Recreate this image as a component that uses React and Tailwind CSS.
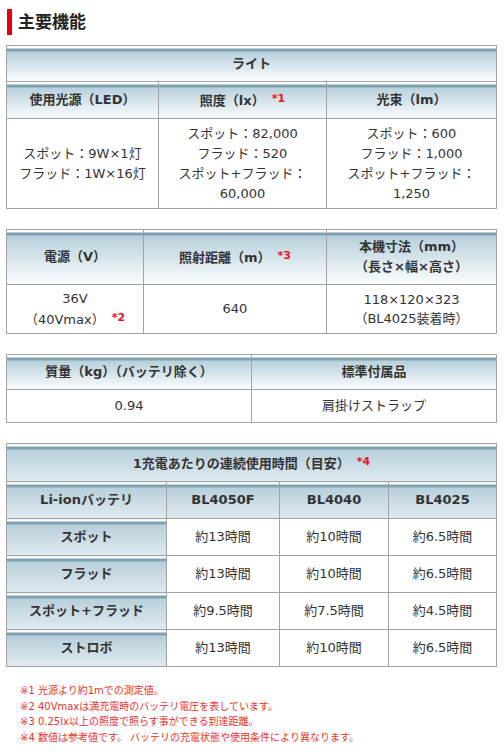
import React from "react";

const hd =
  "border border-[#a3a3a3] text-center font-bold text-[13px] text-[#333] bg-[linear-gradient(to_bottom,#fff_0,#fff_2px,#7ea3b0_2px,#7ea3b0_5px,#b7cfdb_5px,#fbfdfe_100%)]";
const hd2 =
  "border border-[#a3a3a3] text-center font-bold text-[13px] text-[#333] bg-[linear-gradient(to_bottom,#fff_0,#fff_2px,#7ea3b0_2px,#7ea3b0_5px,#b7cfdb_5px,#dfeaf0_100%)]";
const td = "border border-[#a3a3a3] text-center text-[13px] text-[#333] bg-white";

function Note({ n }) {
  return (
    <span className="ml-[7px] text-[11px] font-bold text-[#e8161b] align-[3px]">
      *{n}
    </span>
  );
}

export default function App() {
  return (
    <div
      className="w-[504px] h-[754px] bg-white overflow-hidden leading-[20px]"
      style={{ fontFamily: '"DejaVu Sans", Verdana, "Noto Sans CJK JP", sans-serif' }}
    >
      {/* section title */}
      <div className="flex items-center h-[26px] mt-[9px] ml-[7px]">
        <div className="w-[5px] h-[26px] bg-[#e60012]" />
        <h2 className="ml-[6px] text-[17px] font-bold text-[#222]">主要機能</h2>
      </div>

      <div className="mt-[10px] ml-[6px] w-[491px] flex flex-col gap-[20px]">
        {/* ライト */}
        <table className="w-full border-collapse table-fixed">
          <colgroup>
            <col className="w-[152px]" />
            <col className="w-[168px]" />
            <col />
          </colgroup>
          <tbody>
            <tr className="h-[36px]">
              <th colSpan={3} className={hd}>ライト</th>
            </tr>
            <tr className="h-[37px]">
              <th className={hd}>使用光源（LED）</th>
              <th className={hd}>
                照度（lx）<Note n={1} />
              </th>
              <th className={hd}>光束（lm）</th>
            </tr>
            <tr className="h-[90px]">
              <td className={td}>
                スポット：9W×1灯
                <br />
                フラッド：1W×16灯
              </td>
              <td className={td}>
                スポット：82,000
                <br />
                フラッド：520
                <br />
                スポット+フラッド：
                <br />
                60,000
              </td>
              <td className={td}>
                スポット：600
                <br />
                フラッド：1,000
                <br />
                スポット+フラッド：
                <br />
                1,250
              </td>
            </tr>
          </tbody>
        </table>

        {/* 電源 */}
        <table className="w-full border-collapse table-fixed">
          <colgroup>
            <col className="w-[137px]" />
            <col className="w-[183px]" />
            <col />
          </colgroup>
          <tbody>
            <tr className="h-[55px]">
              <th className={hd}>電源（V）</th>
              <th className={hd}>
                照射距離（m）<Note n={3} />
              </th>
              <th className={hd}>
                本機寸法（mm）
                <br />
                （長さ×幅×高さ）
              </th>
            </tr>
            <tr className="h-[49px]">
              <td className={td + " leading-[19px]"}>
                36V
                <br />
                （40Vmax）<Note n={2} />
              </td>
              <td className={td}>640</td>
              <td className={td + " leading-[19px]"}>
                118×120×323
                <br />
                （BL4025装着時）
              </td>
            </tr>
          </tbody>
        </table>

        {/* 質量 */}
        <table className="w-full border-collapse table-fixed">
          <colgroup>
            <col className="w-[245px]" />
            <col />
          </colgroup>
          <tbody>
            <tr className="h-[35px]">
              <th className={hd}>質量（kg）（バッテリ除く）</th>
              <th className={hd}>標準付属品</th>
            </tr>
            <tr className="h-[33px]">
              <td className={td}>0.94</td>
              <td className={td}>肩掛けストラップ</td>
            </tr>
          </tbody>
        </table>

        {/* 連続使用時間 */}
        <table className="w-full border-collapse table-fixed">
          <colgroup>
            <col className="w-[160px]" />
            <col className="w-[113px]" />
            <col className="w-[109px]" />
            <col />
          </colgroup>
          <tbody>
            <tr className="h-[38px]">
              <th colSpan={4} className={hd2}>
                1充電あたりの連続使用時間（目安）<Note n={4} />
              </th>
            </tr>
            <tr className="h-[37px]">
              <th className={hd2}>Li-ionバッテリ</th>
              <th className={hd2}>BL4050F</th>
              <th className={hd2}>BL4040</th>
              <th className={hd2}>BL4025</th>
            </tr>
            {[
              ["スポット", "約13時間", "約10時間", "約6.5時間"],
              ["フラッド", "約13時間", "約10時間", "約6.5時間"],
              ["スポット+フラッド", "約9.5時間", "約7.5時間", "約4.5時間"],
              ["ストロボ", "約13時間", "約10時間", "約6.5時間"],
            ].map((r) => (
              <tr key={r[0]} className="h-[37px]">
                <th className={hd2}>{r[0]}</th>
                <td className={td}>{r[1]}</td>
                <td className={td}>{r[2]}</td>
                <td className={td}>{r[3]}</td>
              </tr>
            ))}
          </tbody>
        </table>
      </div>

      {/* notes */}
      <ul className="mt-[16px] ml-[20px] text-[10px] leading-[15.5px] text-[#e8332c]">
        <li>※1 光源より約1mでの測定値。</li>
        <li>※2 40Vmaxは満充電時のバッテリ電圧を表しています。</li>
        <li>※3 0.25lx以上の照度で照らす事ができる到達距離。</li>
        <li>※4 数値は参考値です。 バッテリの充電状態や使用条件により異なります。</li>
      </ul>
    </div>
  );
}
